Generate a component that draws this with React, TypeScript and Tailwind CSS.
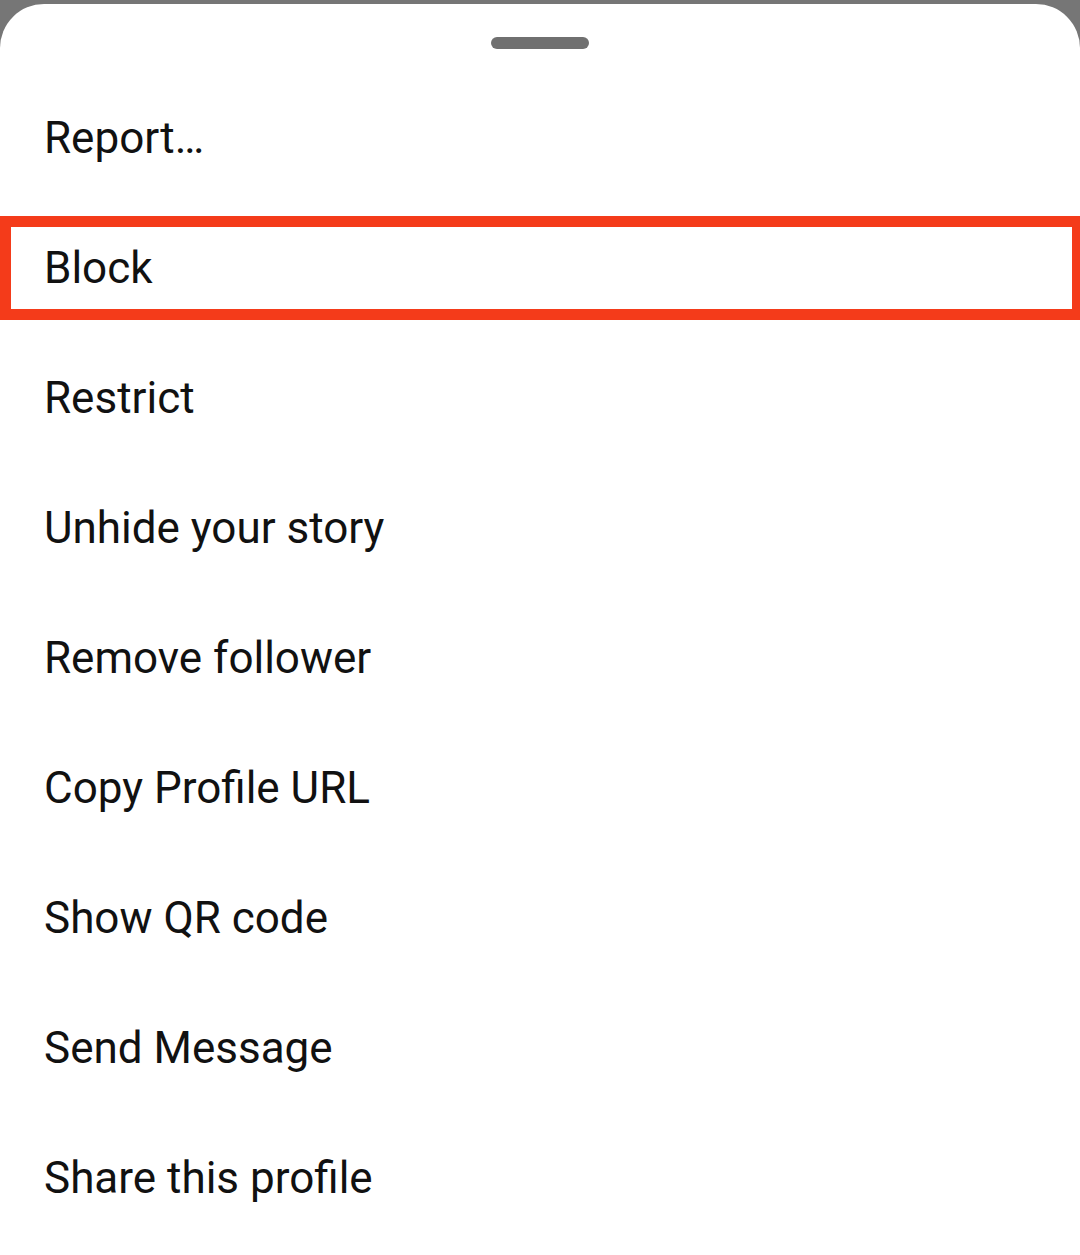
const items = [
  "Report…",
  "Block",
  "Restrict",
  "Unhide your story",
  "Remove follower",
  "Copy Profile URL",
  "Show QR code",
  "Send Message",
  "Share this profile",
];

export default function App() {
  return (
    <div className="h-[1255px] w-[1080px] overflow-hidden bg-[#767676] pt-[4px]">
      <div
        className="h-full rounded-t-[44px] bg-white"
        style={{ fontFamily: "Roboto, 'Noto Sans', sans-serif" }}
      >
        <div className="flex justify-center pt-[33px]">
          <div className="h-[12px] w-[98px] rounded-full bg-[#707070]" />
        </div>
        <ul className="mt-[24px]">
          {items.map((label) =>
            label === "Block" ? (
              <li key={label} className="py-[13px]">
                <div className="flex h-[104px] items-center border-[11px] border-r-[8px] border-[#f43b1a] pl-[33px]">
                  <span className="text-[44px] leading-none text-[#111]">{label}</span>
                </div>
              </li>
            ) : (
              <li key={label} className="flex h-[130px] items-center pl-[44px]">
                <span className="text-[44px] leading-none text-[#111]">{label}</span>
              </li>
            )
          )}
        </ul>
      </div>
    </div>
  );
}
